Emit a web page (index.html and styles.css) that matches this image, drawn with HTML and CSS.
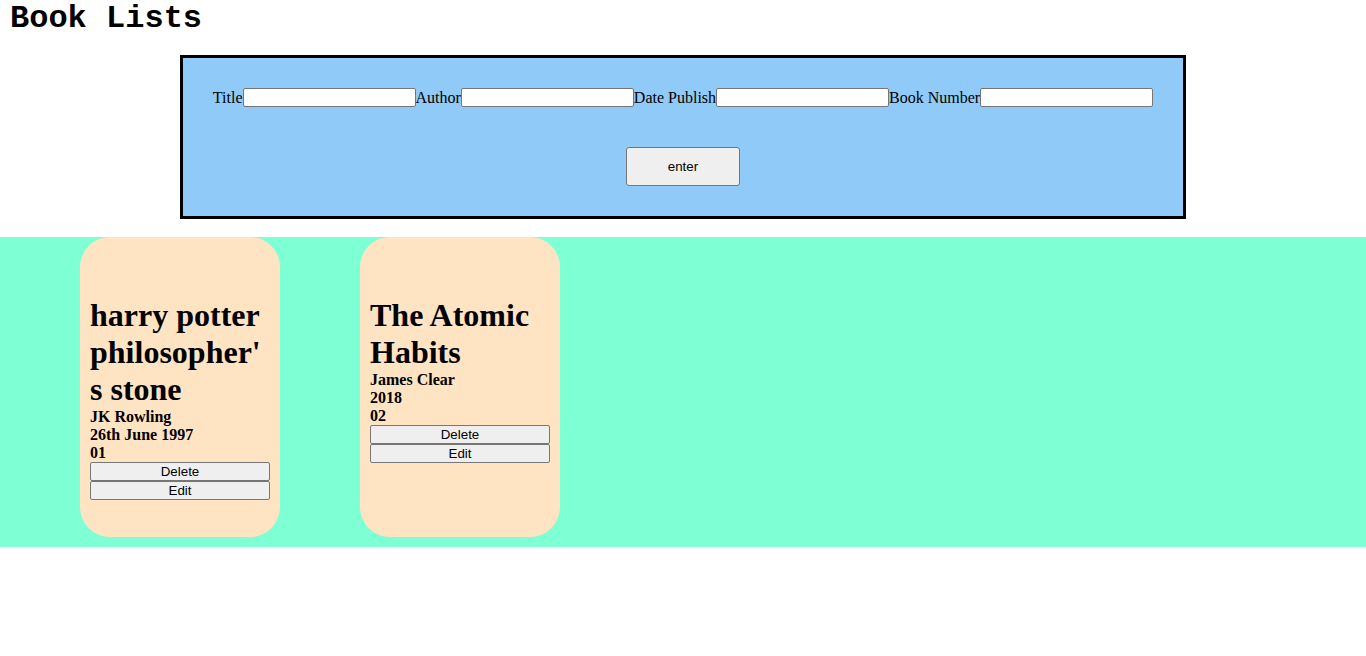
FILE: index.html
```html
<!DOCTYPE html>
<html>
<head>
<meta charset="utf-8">
<title>Book Lists</title>
<link rel="stylesheet" href="styles.css">
</head>
<body>
<h1 class="page-title">Book Lists</h1>
<form class="book-form">
  <div class="field-row">
    <label class="field-label">Title</label><input class="field-input" type="text"><label class="field-label">Author</label><input class="field-input" type="text"><label class="field-label">Date Publish</label><input class="field-input" type="text"><label class="field-label">Book Number</label><input class="field-input" type="text">
  </div>
  <div class="submit-row">
    <button class="enter-btn" type="button">enter</button>
  </div>
</form>
<section class="book-list">
  <div class="book-card">
    <h1 class="book-title">harry potter philosopher's stone</h1>
    <p class="book-meta">JK Rowling</p>
    <p class="book-meta">26th June 1997</p>
    <p class="book-meta">01</p>
    <button class="card-btn" type="button">Delete</button>
    <button class="card-btn" type="button">Edit</button>
  </div>
  <div class="book-card">
    <h1 class="book-title">The Atomic Habits</h1>
    <p class="book-meta">James Clear</p>
    <p class="book-meta">2018</p>
    <p class="book-meta">02</p>
    <button class="card-btn" type="button">Delete</button>
    <button class="card-btn" type="button">Edit</button>
  </div>
</section>
</body>
</html>
```
FILE: styles.css
```css
body {
  margin: 0;
  font-family: "Liberation Serif", "Times New Roman", serif;
  font-size: 16px;
  color: #000;
  background: #fff;
}

.page-title {
  margin: 0;
  padding: 1px 0 0 10px;
  font-family: "Liberation Mono", "Courier New", monospace;
  font-size: 32px;
  font-weight: bold;
  line-height: 35px;
}

.book-form {
  box-sizing: border-box;
  width: 1006px;
  margin: 19px auto 18px;
  border: 3px solid #000;
  background: #90caf9;
  padding: 30px 0 30px;
}

.field-row {
  display: flex;
  justify-content: center;
  align-items: center;
  height: 19px;
}

.field-label {
  font-size: 16px;
  line-height: 19px;
  white-space: nowrap;
}

.field-input {
  box-sizing: border-box;
  width: 173px;
  height: 19px;
  margin: 0;
  padding: 1px 2px;
  border: 1px solid #767676;
  border-radius: 2px;
  background: #fff;
  font-family: "Liberation Sans", Arial, sans-serif;
  font-size: 13.333px;
}

.submit-row {
  display: flex;
  justify-content: center;
  margin-top: 40px;
}

.enter-btn {
  box-sizing: border-box;
  width: 114px;
  height: 39px;
  margin: 0;
  border: 1px solid #767676;
  border-radius: 3px;
  background: #efefef;
  font-family: "Liberation Sans", Arial, sans-serif;
  font-size: 13.333px;
  color: #000;
}

.book-list {
  display: flex;
  gap: 80px;
  background: #7fffd4;
  padding: 0 0 10px 80px;
}

.book-card {
  box-sizing: border-box;
  width: 200px;
  height: 300px;
  padding: 10px;
  border-radius: 30px;
  background: #ffe4c4;
  display: flex;
  flex-direction: column;
}

.book-title {
  margin: 50px 0 0;
  font-size: 32px;
  font-weight: bold;
  line-height: normal;
  overflow-wrap: break-word;
}

.book-meta {
  margin: 0;
  font-size: 16px;
  font-weight: bold;
  line-height: 18px;
}

.card-btn {
  box-sizing: border-box;
  width: 180px;
  height: 19px;
  margin: 0;
  padding: 0;
  border: 1px solid #767676;
  border-radius: 2px;
  background: #efefef;
  font-family: "Liberation Sans", Arial, sans-serif;
  font-size: 13.333px;
  color: #000;
  line-height: 17px;
}
```
